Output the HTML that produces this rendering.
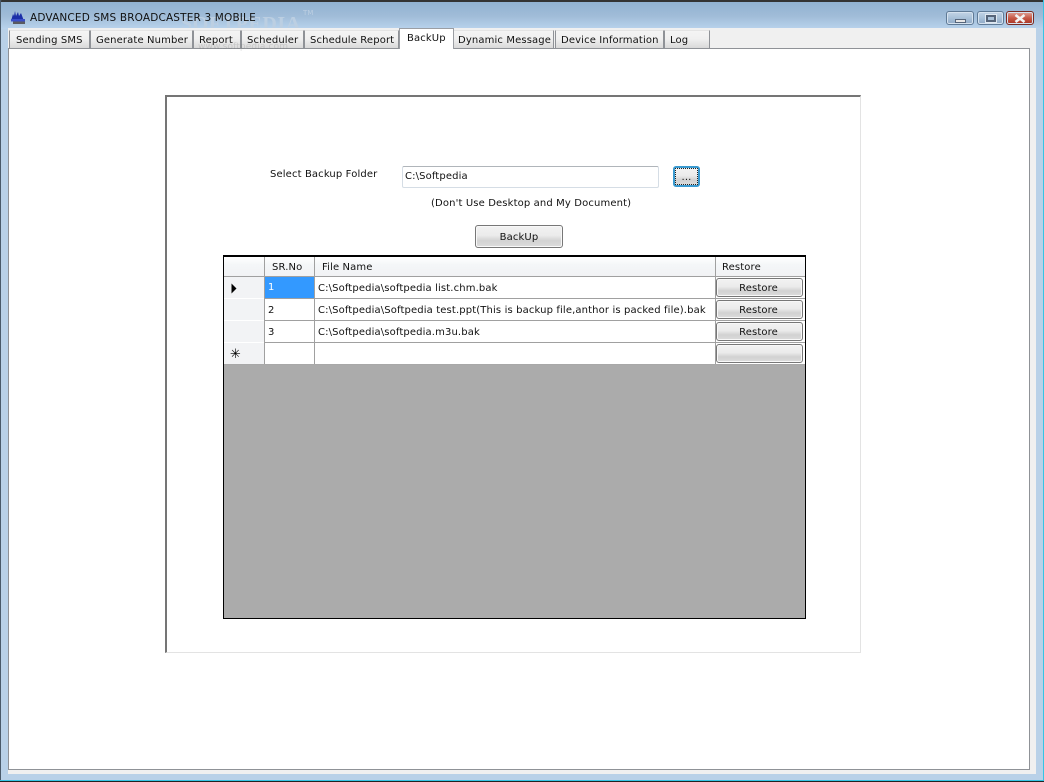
<!DOCTYPE html>
<html><head><meta charset="utf-8"><style>
html,body{margin:0;padding:0;background:#fff}
#w{position:relative;width:1044px;height:782px;overflow:hidden;background:#b9d1e8;font-family:"DejaVu Sans","Liberation Sans",sans-serif;font-size:10px;letter-spacing:.13px;color:#111}
#w div{position:absolute;box-sizing:border-box;white-space:nowrap}
.t{line-height:14px}
.tab{top:30px;height:19px;background:linear-gradient(#f4f4f4 0,#f0f0f0 45%,#d9d9d9 100%);border:1px solid #8f9297;border-top-color:#e4e4e4;line-height:19px;padding-left:5px}
.btn{background:linear-gradient(#f2f2f2 0,#ebebeb 45%,#d2d2d2 70%,#dcdcdc 100%);border:1px solid #777;border-radius:3px;text-align:center;box-shadow:inset 0 0 0 1px #f8f8f8}
.hl{background:#a0a0a0}
.wb{top:11px;height:14px;border-radius:3px;border:1px solid #5f7a96;box-shadow:inset 0 0 0 1px #d5e2ef}
</style></head><body><div id="w">
<div style="left:0;top:0;width:1044px;height:29px;background:linear-gradient(#8fb0d0 0,#a0bcd8 55%,#b9d3ec 100%)"></div>
<div style="left:0;top:0;width:1044px;height:2px;background:#333;border-radius:6px 6px 0 0"></div>
<div style="left:0;top:0;width:1px;height:782px;background:#4a5a6a"></div>
<div style="left:1043px;top:0;width:1px;height:782px;background:#35c4e4"></div>
<div style="left:0;top:780px;width:1044px;height:1px;background:#35c4e4"></div>
<div style="left:0;top:781px;width:1044px;height:1px;background:#222"></div>

<div style="left:181px;top:12px;font:bold 20px 'Liberation Serif',serif;letter-spacing:.6px;color:#bccfe2;line-height:24px">SOFTPEDIA</div>
<div style="left:303px;top:9px;font-size:7px;line-height:8px;color:#bccfe2">TM</div>

<svg style="position:absolute;left:10px;top:10px" width="16" height="15" viewBox="0 0 16 15"><path d="M1 11 L3 4 L4 6 L5 1 L6 6 L8 2 L9 6 L11 3 L14 11Z" fill="#1c2fa8"/><rect x="1" y="9" width="14" height="2.5" fill="#3a4ec8"/><rect x="3" y="11.5" width="12" height="2.5" fill="#5a5a60"/></svg>
<div class="t" style="left:30px;top:11px;font-size:10.5px;letter-spacing:.16px;color:#111">ADVANCED SMS BROADCASTER 3 MOBILE</div>

<div class="wb" style="left:946px;width:28px;background:linear-gradient(#c3d4e6,#a9c1d9 50%,#8fa9c5)"><div style="left:8px;top:7px;width:11px;height:4px;background:#e6e6e6;border:1px solid #56657a"></div></div>
<div class="wb" style="left:977px;width:27px;background:linear-gradient(#c3d4e6,#a9c1d9 50%,#8fa9c5)"><div style="left:8px;top:3px;width:10px;height:7px;background:#a9c1d9;border:2px solid #56657a;box-shadow:0 0 0 1px #dfe8f1"></div></div>
<div class="wb" style="left:1006px;width:28px;border-color:#7a2a22;background:linear-gradient(#e0a59a,#c85a48 50%,#a83222)"><svg style="position:absolute;left:7px;top:2px" width="12" height="9"><path d="M1.5 1 L10.5 8 M10.5 1 L1.5 8" stroke="#f2f2f2" stroke-width="2.6" fill="none"/></svg></div>

<div style="left:8px;top:28px;width:1028px;height:746px;background:#f0f0f0"></div>
<div style="left:8px;top:48px;width:1022px;height:722px;background:#fff;border:1px solid #8f9297"></div>

<div class="tab" style="left:9px;width:81px;padding-left:6px">Sending SMS</div>
<div class="tab" style="left:90px;width:103px">Generate Number</div>
<div class="tab" style="left:193px;width:48px">Report</div>
<div class="tab" style="left:241px;width:63px">Scheduler</div>
<div class="tab" style="left:304px;width:95px">Schedule Report</div>
<div class="tab" style="left:399px;top:28px;height:21px;width:55px;background:#fff;border:1px solid #9b9ea3;border-bottom:0;padding-left:7px;line-height:20px;z-index:2">BackUp</div>
<div class="tab" style="left:453px;width:101px;padding-left:4px">Dynamic Message</div>
<div class="tab" style="left:555px;width:109px;padding-left:5px">Device Information</div>
<div class="tab" style="left:664px;width:46px;padding-left:5px">Log</div>

<div style="left:165px;top:95px;width:696px;height:558px;border:1px solid #e3e3e3;border-top:2px solid #757575;border-left:2px solid #757575"></div>

<div class="t" style="left:270px;top:168px">Select Backup Folder</div>
<div class="t" style="left:402px;top:166px;width:257px;height:22px;border:1px solid #d5dde5;border-top-color:#b0b5ba;border-radius:2px;padding-left:2px;line-height:20px;background:#fff">C:\Softpedia</div>
<div class="btn" style="left:673px;top:166px;width:27px;height:21px;border:2px solid #3a9ad0;line-height:19px;box-shadow:none">...<div style="left:0;top:0;width:23px;height:17px;border:1px dotted #222"></div></div>
<div class="t" style="left:431px;top:197px">(Don't Use Desktop and My Document)</div>
<div class="btn" style="left:475px;top:225px;width:88px;height:23px;line-height:23px">BackUp</div>

<div style="left:223px;top:255px;width:583px;height:364px;background:#ababab;border:1px solid #000;border-top-width:2px"></div>
<div style="left:224px;top:257px;width:581px;height:108px;background:#fff"></div>
<div style="left:224px;top:257px;width:581px;height:20px;background:linear-gradient(#fff,#f4f6f8 40%,#f1f2f4)"></div>
<div style="left:224px;top:277px;width:40px;height:88px;background:#f2f3f5"></div>
<div class="hl" style="left:224px;top:276px;width:581px;height:1px"></div>
<div style="left:224px;top:298px;width:40px;height:1px;background:#fff"></div>
<div style="left:224px;top:320px;width:40px;height:1px;background:#fff"></div>
<div style="left:224px;top:342px;width:40px;height:1px;background:#fff"></div>
<div class="hl" style="left:264px;top:298px;width:541px;height:1px"></div>
<div class="hl" style="left:264px;top:320px;width:541px;height:1px"></div>
<div class="hl" style="left:264px;top:342px;width:541px;height:1px"></div>
<div class="hl" style="left:264px;top:257px;width:1px;height:108px"></div>
<div class="hl" style="left:314px;top:257px;width:1px;height:108px"></div>
<div class="hl" style="left:715px;top:257px;width:1px;height:108px"></div>
<div style="left:224px;top:364px;width:581px;height:1px;background:#a8a8a8"></div>

<div class="t" style="left:272px;top:261px">SR.No</div>
<div class="t" style="left:322px;top:261px">File Name</div>
<div class="t" style="left:722px;top:261px">Restore</div>

<svg style="position:absolute;left:231px;top:283px" width="6" height="11"><path d="M0.5 0.5 L5.5 5.5 L0.5 10.5Z" fill="#000"/></svg>
<div class="t" style="left:230px;top:347px;font-size:13px;line-height:16px;color:#000">✳</div>

<div style="left:265px;top:277px;width:49px;height:21px;background:#3399ff;color:#fff;padding-left:3px;line-height:22px">1</div>
<div class="t" style="left:268px;top:304px">2</div>
<div class="t" style="left:268px;top:326px">3</div>
<div class="t" style="left:318px;top:282px">C:\Softpedia\softpedia list.chm.bak</div>
<div class="t" style="left:318px;top:304px">C:\Softpedia\Softpedia test.ppt(This is backup file,anthor is packed file).bak</div>
<div class="t" style="left:318px;top:326px">C:\Softpedia\softpedia.m3u.bak</div>

<div class="btn" style="left:716px;top:278px;width:87px;height:19px;line-height:20px;padding-right:2px">Restore</div>
<div class="btn" style="left:716px;top:300px;width:87px;height:19px;line-height:20px;padding-right:2px">Restore</div>
<div class="btn" style="left:716px;top:322px;width:87px;height:19px;line-height:20px;padding-right:2px">Restore</div>
<div class="btn" style="left:716px;top:344px;width:87px;height:19px"></div>
<div style="left:198px;top:41px;font-size:9px;color:rgba(120,120,120,.22);line-height:12px;z-index:5">www.softpedia.com</div>
</div></body></html>
